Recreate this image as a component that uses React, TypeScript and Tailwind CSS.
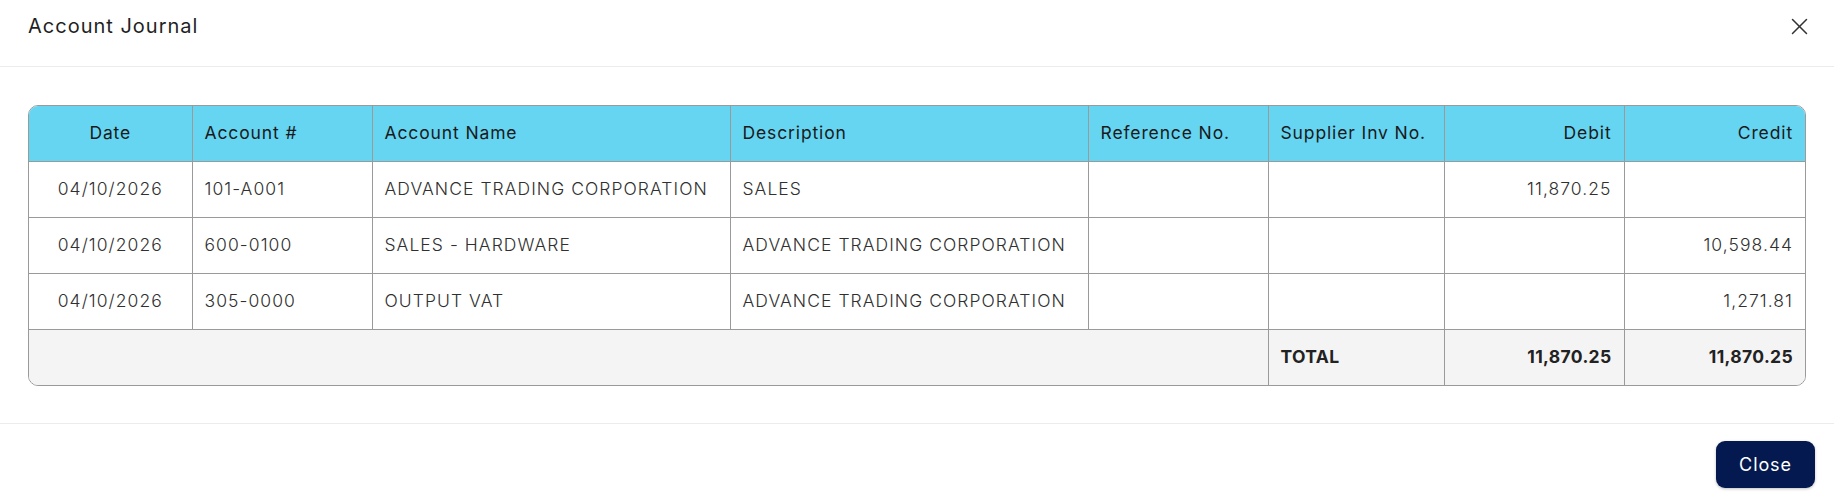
type Line = {
  date: string;
  account: string;
  name: string;
  description: string;
  reference: string;
  supplierInv: string;
  debit: string;
  credit: string;
};

const lines: Line[] = [
  { date: '04/10/2026', account: '101-A001', name: 'ADVANCE TRADING CORPORATION', description: 'SALES', reference: '', supplierInv: '', debit: '11,870.25', credit: '' },
  { date: '04/10/2026', account: '600-0100', name: 'SALES - HARDWARE', description: 'ADVANCE TRADING CORPORATION', reference: '', supplierInv: '', debit: '', credit: '10,598.44' },
  { date: '04/10/2026', account: '305-0000', name: 'OUTPUT VAT', description: 'ADVANCE TRADING CORPORATION', reference: '', supplierInv: '', debit: '', credit: '1,271.81' },
];

const cell = 'px-3 border-r border-b border-[#9a9a9a]';

export default function App() {
  return (
    <div className="w-[1834px] h-[496px] bg-white flex flex-col font-['Inter',sans-serif] text-[#222]">
      {/* header */}
      <div className="h-[67px] shrink-0 border-b border-[#ececec] flex items-start justify-between pl-[28px] pr-[26px] pt-[15px]">
        <h2 className="text-[20px] leading-[22px] font-normal tracking-[0.05em] text-[#1f1f1f]">Account Journal</h2>
        <button className="mt-[3px] text-[#333]">
          <svg width="17" height="17" viewBox="0 0 17 17" fill="none" stroke="currentColor" strokeWidth="1.5" strokeLinecap="round">
            <line x1="1.5" y1="1.5" x2="15.5" y2="15.5" />
            <line x1="15.5" y1="1.5" x2="1.5" y2="15.5" />
          </svg>
        </button>
      </div>

      {/* body */}
      <div className="px-[28px] pt-[38px] pb-[37px] shrink-0">
        <div className="rounded-[10px] border border-[#9a9a9a] overflow-hidden">
          <table className="w-full border-collapse table-fixed text-[17.5px]">
            <colgroup>
              <col className="w-[163px]" />
              <col className="w-[180px]" />
              <col className="w-[358px]" />
              <col className="w-[358px]" />
              <col className="w-[180px]" />
              <col className="w-[176px]" />
              <col className="w-[180px]" />
              <col />
            </colgroup>
            <thead>
              <tr className="h-[55px] bg-[#65d5f2] text-[#1a1a1a] tracking-[0.05em]">
                <th className={`${cell} text-center font-normal`}>Date</th>
                <th className={`${cell} text-left font-normal`}>Account #</th>
                <th className={`${cell} text-left font-normal`}>Account Name</th>
                <th className={`${cell} text-left font-normal`}>Description</th>
                <th className={`${cell} text-left font-normal`}>Reference No.</th>
                <th className={`${cell} text-left font-normal`}>Supplier Inv No.</th>
                <th className={`${cell} text-right font-normal`}>Debit</th>
                <th className={`${cell} text-right font-normal border-r-0`}>Credit</th>
              </tr>
            </thead>
            <tbody className="text-[#303030] font-light tracking-[0.06em]">
              {lines.map((l, i) => (
                <tr key={i} className="h-[56px]">
                  <td className={`${cell} text-center`}>{l.date}</td>
                  <td className={cell}>{l.account}</td>
                  <td className={cell}>{l.name}</td>
                  <td className={cell}>{l.description}</td>
                  <td className={cell}>{l.reference}</td>
                  <td className={cell}>{l.supplierInv}</td>
                  <td className={`${cell} text-right`}>{l.debit}</td>
                  <td className={`${cell} text-right border-r-0`}>{l.credit}</td>
                </tr>
              ))}
              <tr className="h-[56px] bg-[#f4f4f4] font-bold text-[#222] tracking-[0.02em]">
                <td colSpan={5} className={`${cell} border-b-0`}></td>
                <td className={`${cell} border-b-0`}>TOTAL</td>
                <td className={`${cell} border-b-0 text-right`}>11,870.25</td>
                <td className={`${cell} border-b-0 border-r-0 text-right`}>11,870.25</td>
              </tr>
            </tbody>
          </table>
        </div>
      </div>

      {/* footer */}
      <div className="border-t border-[#ececec] flex justify-end pr-[19px] pt-[17px]">
        <button className="w-[99px] h-[47px] rounded-[9px] bg-[#03194f] text-white text-[18px] tracking-[0.05em] shadow-[0_1px_3px_rgba(0,0,0,0.25)]">
          Close
        </button>
      </div>
    </div>
  );
}
